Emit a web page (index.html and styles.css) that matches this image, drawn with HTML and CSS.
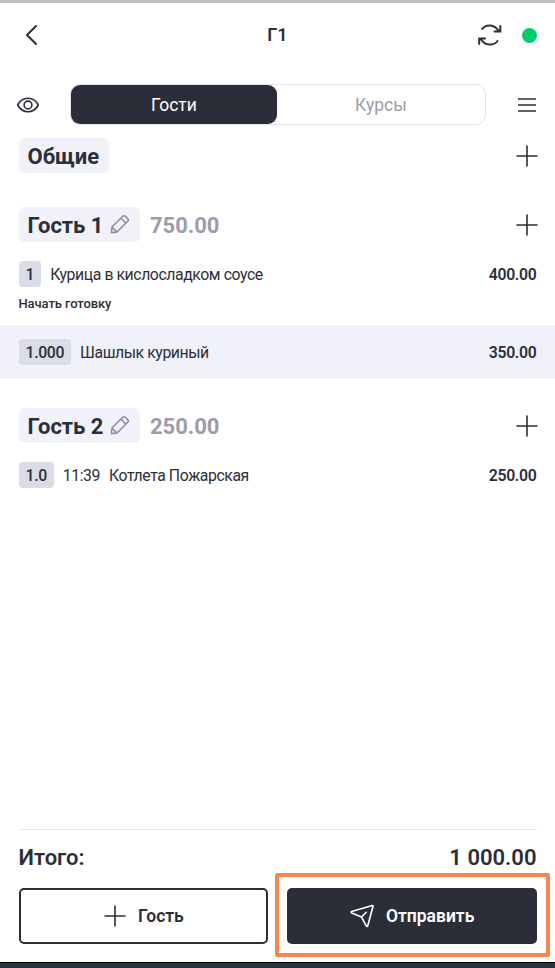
FILE: index.html
```
<!DOCTYPE html>
<html lang="ru">
<head>
<meta charset="utf-8">
<title>Г1</title>
<link rel="stylesheet" href="styles.css">
</head>
<body>
<svg class="defs" width="0" height="0">
  <symbol id="plus" viewBox="0 0 22 22"><path d="M11 1v20M1 11h20"/></symbol>
  <symbol id="pencil" viewBox="0 0 20 20"><path d="M1.400 18.600 2 13 12.700 2.300c.8-.8 1.900-.8 2.700 0l2.300 2.300c.8.8.8 1.900 0 2.700L7 18 1.400 18.600ZM11 4.200l4.800 4.800M2.100 13.200l4.700 4.700"/></symbol>
</svg>
<div class="app">
  <header class="header">
    <svg class="icon back" width="14" height="22" viewBox="0 0 14 22"><path d="M12 2 3 11l9 9"/></svg>
    <h1 class="title">Г1</h1>
    <div class="status">
      <svg class="icon sync" width="26" height="24" viewBox="0 0 26 24"><path d="M5 6C9 1 17.500 1 21.500 7.800M23.300 3v5.400h-5.800M20.500 18C16.500 23 8 23 4 16.200M2.200 21v-5.400h5.800"/></svg>
      <span class="online"></span>
    </div>
  </header>
  <nav class="toolbar">
    <svg class="icon" width="24" height="18" viewBox="0 0 24 18"><path d="M1.700 9C4.300 4.200 7.700 2.300 12 2.300S19.700 4.200 22.300 9C19.700 13.800 16.300 15.700 12 15.700S4.300 13.800 1.700 9Z"/><circle cx="12" cy="9" r="3.900"/></svg>
    <div class="tabs">
      <span class="tab active">Гости</span>
      <span class="tab">Курсы</span>
    </div>
    <svg class="icon" width="18" height="16" viewBox="0 0 18 16"><path d="M.5 2h17M.5 8h17M.5 14h17"/></svg>
  </nav>
  <main class="order">
    <section class="guest shared">
      <div class="guest-head">
        <span class="chip">Общие</span>
        <svg class="icon add" width="22" height="22"><use href="#plus"/></svg>
      </div>
    </section>
    <section class="guest first">
      <div class="guest-head">
        <span class="chip">Гость 1<svg class="icon pencil" width="20" height="20"><use href="#pencil"/></svg></span>
        <span class="sum">750.00</span>
        <svg class="icon add" width="22" height="22"><use href="#plus"/></svg>
      </div>
      <div class="item">
        <span class="qty">1</span>
        <span class="name">Курица в кислосладком соусе</span>
        <span class="price">400.00</span>
      </div>
      <div class="note">Начать готовку</div>
      <div class="item selected">
        <span class="qty">1.000</span>
        <span class="name">Шашлык куриный</span>
        <span class="price">350.00</span>
      </div>
    </section>
    <section class="guest">
      <div class="guest-head">
        <span class="chip">Гость 2<svg class="icon pencil" width="20" height="20"><use href="#pencil"/></svg></span>
        <span class="sum">250.00</span>
        <svg class="icon add" width="22" height="22"><use href="#plus"/></svg>
      </div>
      <div class="item">
        <span class="qty">1.0</span>
        <span class="time">11:39</span>
        <span class="name">Котлета Пожарская</span>
        <span class="price">250.00</span>
      </div>
    </section>
  </main>
  <footer class="footer">
    <div class="total"><span>Итого:</span><span>1 000.00</span></div>
    <div class="actions">
      <div class="button outline"><svg class="icon" width="22" height="22"><use href="#plus"/></svg>Гость</div>
      <div class="button solid"><svg class="icon send" width="24" height="24" viewBox="0 0 24 24"><path d="M1.600 7.600 22.300 1.500c.5-.1.800.2.700.7L17.700 22c-.2.600-1 .6-1.300.1L11.500 13 1.700 8.900c-.7-.3-.7-1.100-.1-1.300ZM11.500 13l4.700-4.700"/></svg>Отправить</div>
    </div>
  </footer>
</div>
</body>
</html>
```
FILE: styles.css
```
* { box-sizing: border-box; }
body {
  margin: 0;
  background: #fff;
  color: #2c2e38;
  font-family: Roboto, "Liberation Sans", sans-serif;
}
.defs { display: block; }
.app {
  display: flex;
  flex-direction: column;
  height: 968px;
  border-top: 3px solid #bfbfbf;
  border-bottom: 5px solid #263440;
}
.icon {
  flex: none;
  fill: none;
  stroke: #2c2e38;
  stroke-width: 1.6;
  stroke-linecap: round;
  stroke-linejoin: round;
}
.header {
  display: grid;
  grid-template-columns: 1fr auto 1fr;
  align-items: center;
  height: 64px;
  padding: 0 18px 0 24px;
}
.back { stroke-width: 2; }
.title { margin: 0 0 0 -6px; font-size: 18px; font-weight: 600; line-height: 24px; }
.status { display: flex; justify-content: flex-end; align-items: center; gap: 19px; }
.sync { stroke-width: 2; stroke-linejoin: miter; }
.online { width: 15px; height: 15px; border-radius: 50%; background: #00ce6c; }
.toolbar {
  display: flex;
  align-items: center;
  height: 41px;
  margin-top: 17px;
  padding: 0 19px 0 16px;
}
.tabs {
  display: flex;
  width: 416px;
  height: 41px;
  margin: 0 32px 0 30px;
  border: 1.500px solid #e3e3ea;
  border-radius: 10px;
}
.tab {
  flex: 1;
  display: flex;
  align-items: center;
  justify-content: center;
  border-radius: 9px;
  color: #9d9bac;
  font-size: 17.500px;
}
.tab.active { flex: 0 0 206px; background: #2b2e39; color: #fff; }
.order { flex: 1; padding-top: 13px; }
.shared { margin-bottom: 34px; }
.first { margin-bottom: 29px; }
.guest-head {
  display: flex;
  align-items: center;
  height: 35px;
  padding: 0 17px 0 18.5px;
}
.chip {
  display: flex;
  align-items: center;
  gap: 7px;
  height: 35px;
  padding: 2px 9.500px 0 9px;
  border-radius: 6px;
  background: #f1f1fa;
  font-size: 22px;
  font-weight: 700;
}
.pencil { margin-top: -3px; margin-right: 0.500px; stroke: #8f8da6; }
.sum { margin: 2px 0 0 9.5px; color: #9d9bac; font-size: 22px; font-weight: 700; }
.add { margin-left: auto; }
.item {
  display: flex;
  align-items: center;
  height: 26px;
  margin-top: 19px;
  padding: 0 18.5px;
  font-size: 15.8px;
  letter-spacing: -0.42px;
}
.qty {
  height: 26px;
  padding: 0 7px;
  border-radius: 4px;
  background: #dadce8;
  font-weight: 500;
  letter-spacing: -0.35px;
  line-height: 27px;
}
.name, .time { margin: 1px 0 0 9px; }
.price { margin-left: auto; font-weight: 600; letter-spacing: -0.3px; }
.note { margin-top: 8px; padding-left: 18.5px; font-size: 13px; font-weight: 500; letter-spacing: -0.1px; line-height: 18px; }
.item.selected { height: 54px; margin-top: 12px; background: #f1f1fa; }
.footer { height: 134px; padding: 0 18.5px; border-bottom: 1px solid #000; }
.total {
  display: flex;
  align-items: center;
  justify-content: space-between;
  height: 59px;
  padding-bottom: 3px;
  border-top: 1px solid #e5e5e8;
  font-size: 22px;
  font-weight: 600;
}
.actions { display: grid; grid-template-columns: 1fr 1fr; gap: 18.5px; }
.button {
  position: relative;
  display: flex;
  align-items: center;
  justify-content: center;
  gap: 12px;
  height: 55.5px;
  padding-left: 1px;
  border-radius: 5px;
  font-size: 17.5px;
  font-weight: 600;
}
.outline { border: 2px solid #2b2e39; }
.solid { background: #2b2e39; color: #fff; }
.solid::after {
  content: "";
  position: absolute;
  inset: -15px -13px -13px -12px;
  border: 4px solid #f98650;
  border-radius: 2px;
}
.send { stroke: #fff; }
```
